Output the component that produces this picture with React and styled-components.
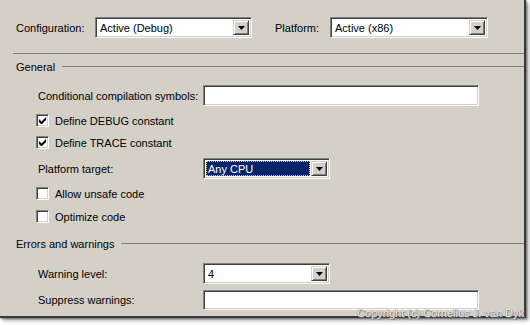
import React from 'react';
import styled, { createGlobalStyle } from 'styled-components';

const Global = createGlobalStyle`
  *, *::before, *::after { box-sizing: border-box; }
  html, body { margin: 0; padding: 0; background: #fff; }
  body { font-family: "Liberation Sans", Arial, sans-serif; font-size: 11px; color: #000; }
`;

const Stage = styled.div`
  position: relative;
  width: 530px;
  height: 325px;
  overflow: hidden;
  background: #fff;
`;

const Window = styled.div`
  width: 526px;
  height: 318px;
  background: #d4d0c8;
  border-right: 2px solid #3a3a3a;
  border-bottom: 2px solid #3a3a3a;
  box-shadow: 1px 1px 2px rgba(0, 0, 0, 0.5), 3px 3px 4px rgba(0, 0, 0, 0.25);
  padding-top: 17px;
  display: flex;
  flex-direction: column;
`;

const TopBar = styled.div`
  display: flex;
  align-items: center;
  height: 21px;
  padding-left: 16px;
`;

const Label = styled.div`
  width: ${p => p.$w}px;
  flex: none;
  white-space: nowrap;
`;

const Spacer = styled.div`
  width: ${p => p.$w}px;
  flex: none;
`;

const Separator = styled.div`
  margin: 15px 0 0 13px;
  height: 1px;
  background: #808080;
`;

const GroupHeader = styled.div`
  display: flex;
  align-items: center;
  gap: 7px;
  height: 13px;
  margin-top: ${p => p.$mt}px;
  padding-left: 16px;
  &::after {
    content: '';
    flex: 1;
    height: 1px;
    background: #808080;
  }
`;

const FieldRow = styled.div`
  display: grid;
  grid-template-columns: 165px auto;
  align-items: center;
  margin: ${p => p.$mt}px 0 0 38px;
  height: ${p => p.$h || 21}px;
`;

const CheckRow = styled.div`
  display: flex;
  align-items: center;
  gap: 6px;
  height: 13px;
  margin: ${p => p.$mt}px 0 0 36px;
`;

const Sunken = styled.div`
  background: #fff;
  border: 1px solid;
  border-color: #808080 #fff #fff #808080;
  box-shadow: inset 1px 1px #404040, inset -1px -1px #d4d0c8;
`;

const TextBox = styled(Sunken)`
  width: 276px;
  height: ${p => p.$h || 21}px;
`;

const SelectBox = styled(Sunken)`
  width: ${p => p.$w}px;
  height: 21px;
  display: flex;
  align-items: stretch;
  padding: 2px;
`;

const SelectValue = styled.div`
  flex: 1;
  display: flex;
  align-items: center;
  padding-left: 2px;
  margin-right: 1px;
  white-space: nowrap;
  background: ${p => (p.$sel ? '#0a246a' : 'transparent')};
  color: ${p => (p.$sel ? '#fff' : '#000')};
  outline: ${p => (p.$sel ? '1px dotted #d8d070' : 'none')};
  outline-offset: -1px;
`;

const DropButton = styled.div`
  width: 16px;
  flex: none;
  background: #d4d0c8;
  border: 1px solid;
  border-color: #d4d0c8 #404040 #404040 #d4d0c8;
  box-shadow: inset 1px 1px #fff, inset -1px -1px #808080;
  display: flex;
  align-items: center;
  justify-content: center;
`;

const CheckBox = styled(Sunken)`
  width: 13px;
  height: 13px;
  flex: none;
  display: flex;
  align-items: center;
  justify-content: center;
`;

const Copyright = styled.div`
  position: absolute;
  right: 6px;
  top: 307px;
  font-family: "Liberation Sans", Arial, sans-serif;
  font-size: 11px;
  color: #e6e6e6;
  text-shadow: 1px 1px 1px #707070, -0.5px -0.5px 0 #9a9a9a;
  white-space: nowrap;
`;

function Select({ w, value, selected }) {
  return (
    <SelectBox $w={w}>
      <SelectValue $sel={selected}>{value}</SelectValue>
      <DropButton>
        <svg width="7" height="4" viewBox="0 0 7 4">
          <polygon points="0,0 7,0 3.5,4" fill="#000" />
        </svg>
      </DropButton>
    </SelectBox>
  );
}

function Check({ checked, label, mt }) {
  return (
    <CheckRow $mt={mt}>
      <CheckBox>
        {checked && (
          <svg width="7" height="7" viewBox="0 0 7 7">
            <path d="M0 2v3l2 2h1l4-4V0L2.5 4.5z" fill="#000" />
          </svg>
        )}
      </CheckBox>
      <span>{label}</span>
    </CheckRow>
  );
}

export default function App() {
  return (
    <>
      <Global />
      <Stage>
        <Window>
          <TopBar>
            <Label $w={79}>Configuration:</Label>
            <Select w={157} value="Active (Debug)" />
            <Spacer $w={23} />
            <Label $w={55}>Platform:</Label>
            <Select w={158} value="Active (x86)" />
          </TopBar>
          <Separator />
          <GroupHeader $mt={6}>General</GroupHeader>
          <FieldRow $mt={12}>
            <span>Conditional compilation symbols:</span>
            <TextBox />
          </FieldRow>
          <Check mt={8} checked label="Define DEBUG constant" />
          <Check mt={9} checked label="Define TRACE constant" />
          <FieldRow $mt={9}>
            <span>Platform target:</span>
            <Select w={127} value="Any CPU" selected />
          </FieldRow>
          <Check mt={8} label="Allow unsafe code" />
          <Check mt={10} label="Optimize code" />
          <GroupHeader $mt={14}>Errors and warnings</GroupHeader>
          <FieldRow $mt={13}>
            <span>Warning level:</span>
            <Select w={127} value="4" />
          </FieldRow>
          <FieldRow $mt={6} $h={20}>
            <span>Suppress warnings:</span>
            <TextBox $h={20} />
          </FieldRow>
        </Window>
        <Copyright>Copyright (c) Cornelius J. van Dyk</Copyright>
      </Stage>
    </>
  );
}
